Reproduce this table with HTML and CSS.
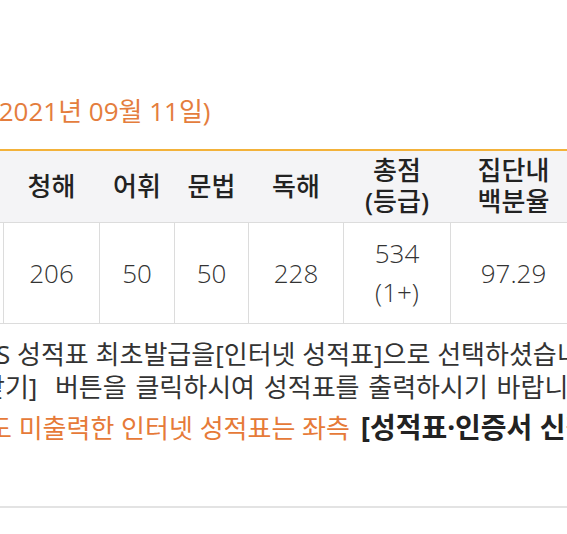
FILE: index.html
```html
<!DOCTYPE html>
<html lang="ko">
<head>
<meta charset="utf-8">
<title>성적표</title>
<link rel="stylesheet" href="styles.css">
</head>
<body>
<div class="page">
  <p class="date">(2021년 09월 11일)</p>
  <table class="score">
    <colgroup>
      <col class="c0"><col class="c1"><col class="c2"><col class="c3"><col class="c4"><col class="c5"><col class="c6">
    </colgroup>
    <thead>
      <tr><th></th><th>청해</th><th>어휘</th><th>문법</th><th>독해</th><th>총점<br>(등급)</th><th>집단내<br>백분율</th></tr>
    </thead>
    <tbody>
      <tr><td></td><td>206</td><td>50</td><td>50</td><td>228</td><td>534<br>(1+)</td><td>97.29</td></tr>
    </tbody>
  </table>
  <div class="notes">
    <p class="note n1">S 성적표 최초발급을[인터넷 성적표]으로 선택하셨습니다.</p>
    <p class="note n2">받기]&nbsp; 버튼을 클릭하시여 성적표를 출력하시기 바랍니다.</p>
    <p class="note n3"><span class="hl">도 미출력한 인터넷 성적표는 좌측</span> <strong>[성적표·인증서 신청]</strong></p>
  </div>
</div>
<hr class="rule">
</body>
</html>
```

FILE: styles.css
```css
html, body {
  margin: 0;
  padding: 0;
  background: #fff;
}
body {
  overflow: hidden;
  font-family: "Noto Sans", "Noto Sans CJK KR", sans-serif;
  color: #333;
}
.page {
  margin-left: -100px;
  width: 900px;
  padding-top: 94px;
}
.date {
  margin: 0;
  padding-left: 91px;
  font-family: "Open Sans", "Noto Sans CJK KR", sans-serif;
  font-size: 26px;
  line-height: 35px;
  color: #e47d3d;
  white-space: nowrap;
}
.score {
  margin-top: 20px;
  border-collapse: collapse;
  table-layout: fixed;
  width: 676px;
  border-top: 2px solid #f3b23a;
}
.c0 { width: 103px; }
.c1 { width: 96px; }
.c2 { width: 75px; }
.c3 { width: 74px; }
.c4 { width: 95px; }
.c5 { width: 107px; }
.c6 { width: 126px; }
.score th {
  background: #f4f4f6;
  font-weight: 500;
  font-size: 26px;
  line-height: 31px;
  color: #222;
  padding: 4px 0 5px;
  text-align: center;
  border-bottom: 1px solid #dcdcdc;
}
.score td {
  font-family: "Open Sans", "Noto Sans", sans-serif;
  font-size: 26px;
  font-weight: 300;
  line-height: 39px;
  color: #333;
  padding: 11px 0 11px;
  text-align: center;
  border: 1px solid #dcdcdc;
  border-top: 0;
}
.notes {
  margin-top: 14px;
}
.note {
  margin: 0;
  font-size: 26px;
  line-height: 33px;
  color: #333;
  white-space: nowrap;
}
.n1 { padding-left: 96px; }
.n2 { padding-left: 81px; word-spacing: 2px; }
.n3 { padding-left: 88px; margin-top: 7px; }
.hl { color: #e67a38; }
.note strong {
  margin-left: 4px;
  font-size: 28px;
  color: #222;
  font-weight: 700;
}
.rule {
  margin: 61px 0 0;
  border: 0;
  height: 2px;
  background: #e3e3e3;
}
```
